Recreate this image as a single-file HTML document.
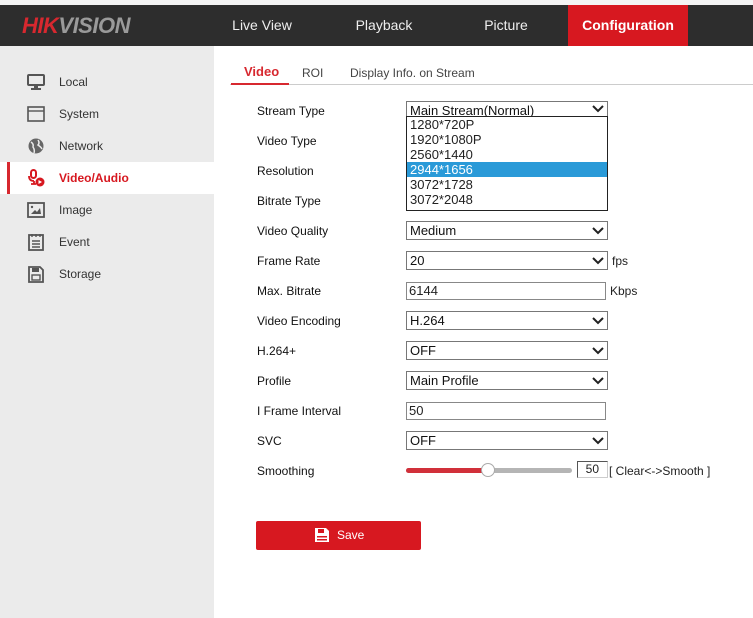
<!DOCTYPE html>
<html><head><style>
*{margin:0;padding:0;box-sizing:border-box}
body{width:753px;height:618px;position:relative;background:#fff;font-family:"Liberation Sans",Arial,sans-serif;font-size:12px;color:#222;overflow:hidden}
.abs{position:absolute}
.top{left:0;top:0;width:753px;height:5px;background:#f4f4f4}
.bar{left:0;top:5px;width:753px;height:41px;background:#2d2d2d}
.nav{top:5px;height:41px;line-height:41px;color:#eee;font-size:14px;text-align:center}
.side{left:0;top:46px;width:214px;height:572px;background:#ebebeb}
.mi{left:0;width:214px;height:32px;line-height:32px;padding-left:59px;font-size:12px;color:#333}
.ic{position:absolute;left:27px;top:8px;width:18px;height:16px}
.lbl{left:257px;font-size:12px;color:#111}
.sel{left:406px;width:202px;height:19px;border:1px solid #777;background:#fff;font-size:13px;line-height:17px;padding-left:3px;color:#111}
.sel svg{position:absolute;right:3px;top:5px}
.inp{left:406px;width:200px;height:18px;border:1px solid #888;font-size:13px;line-height:16px;padding-left:2px}
</style></head><body>
<div class="abs top"></div>
<div class="abs bar"></div>
<div class="abs" style="left:22px;top:13px;font-size:22px;font-weight:bold;font-style:italic;letter-spacing:-0.5px;line-height:26px"><span style="color:#d7282f">HIK</span><span style="color:#9a9a9a">VISION</span></div>
<div class="abs nav" style="left:214px;width:96px">Live View</div>
<div class="abs nav" style="left:335px;width:98px">Playback</div>
<div class="abs nav" style="left:458px;width:96px">Picture</div>
<div class="abs nav" style="left:568px;width:120px;background:#d71820;color:#fff;font-weight:bold">Configuration</div>
<div class="abs side"></div>

<div class="abs mi" style="top:66px"><svg class="ic" viewBox="0 0 18 16"><rect x="1" y="1" width="16" height="10" rx="1" fill="none" stroke="#555" stroke-width="2"/><rect x="7" y="11" width="4" height="3" fill="#555"/><rect x="4" y="14" width="10" height="2" fill="#555"/></svg>Local</div>
<div class="abs mi" style="top:98px"><svg class="ic" viewBox="0 0 18 16"><rect x="1" y="1" width="16" height="14" fill="none" stroke="#555" stroke-width="1.6"/><line x1="1" y1="5" x2="17" y2="5" stroke="#555" stroke-width="1.4"/></svg>System</div>
<div class="abs mi" style="top:130px"><svg class="ic" viewBox="0 0 18 16"><circle cx="9" cy="8" r="7.5" fill="#666"/><path d="M4 4 Q7 6 6 9 Q8 12 7 15 M11 2 Q13 5 11 7 Q14 9 15 11" stroke="#ebebeb" stroke-width="1.5" fill="none"/></svg>Network</div>
<div class="abs mi" style="top:162px;background:#fff;color:#d71820;font-weight:bold"><div class="abs" style="left:7px;top:0;width:3px;height:32px;background:#d7282f"></div><svg class="ic" viewBox="0 0 18 18" style="height:18px;top:7px"><rect x="4" y="1" width="5" height="8" rx="2.5" fill="none" stroke="#d71820" stroke-width="2"/><path d="M2 7 Q2 12 7 12 M7 12 V15 M4 15 H9" stroke="#d71820" stroke-width="1.8" fill="none"/><circle cx="13" cy="13" r="4.5" fill="#d71820"/><path d="M11.5 11 L15 13 L11.5 15Z" fill="#fff"/></svg>Video/Audio</div>
<div class="abs mi" style="top:194px"><svg class="ic" viewBox="0 0 18 16"><rect x="1" y="1" width="16" height="14" fill="none" stroke="#555" stroke-width="1.8"/><path d="M4 12 L8 8 L10 10 L13 6 L14 12Z" fill="#555"/><circle cx="5" cy="5" r="1.2" fill="#555"/></svg>Image</div>
<div class="abs mi" style="top:226px"><svg class="ic" viewBox="0 0 18 18" style="height:18px;top:7px"><rect x="2" y="2" width="14" height="15" fill="none" stroke="#555" stroke-width="1.8"/><path d="M5 1v3M9 1v3M13 1v3M5 8h8M5 11h8M5 14h8" stroke="#555" stroke-width="1.4"/></svg>Event</div>
<div class="abs mi" style="top:258px"><svg class="ic" viewBox="0 0 18 18" style="height:18px;top:7px"><path d="M2 2h11l3 3v12H2Z" fill="none" stroke="#555" stroke-width="1.8"/><rect x="5" y="3" width="7" height="4" fill="#555"/><rect x="5" y="10" width="8" height="5" fill="none" stroke="#555" stroke-width="1.4"/></svg>Storage</div>

<div class="abs" style="left:230px;top:84px;width:523px;height:1px;background:#ccc"></div>
<div class="abs" style="left:231px;top:83px;width:58px;height:2px;background:#d7282f"></div>
<div class="abs" style="left:244px;top:64px;font-size:13px;font-weight:bold;color:#d7282f">Video</div>
<div class="abs" style="left:302px;top:66px;font-size:12px;color:#444">ROI</div>
<div class="abs" style="left:350px;top:66px;font-size:12px;color:#444">Display Info. on Stream</div>

<div class="abs lbl" style="top:104px">Stream Type</div>
<div class="abs lbl" style="top:134px">Video Type</div>
<div class="abs lbl" style="top:164px">Resolution</div>
<div class="abs lbl" style="top:194px">Bitrate Type</div>
<div class="abs lbl" style="top:224px">Video Quality</div>
<div class="abs lbl" style="top:254px">Frame Rate</div>
<div class="abs lbl" style="top:284px">Max. Bitrate</div>
<div class="abs lbl" style="top:314px">Video Encoding</div>
<div class="abs lbl" style="top:344px">H.264+</div>
<div class="abs lbl" style="top:374px">Profile</div>
<div class="abs lbl" style="top:404px">I Frame Interval</div>
<div class="abs lbl" style="top:434px">SVC</div>
<div class="abs lbl" style="top:464px">Smoothing</div>

<div class="abs sel" style="top:101px;height:16px;overflow:hidden">Main Stream(Normal)<svg width="12" height="8" viewBox="0 0 12 8" style="top:3px"><path d="M1 1l5 5 5-5" stroke="#222" stroke-width="2" fill="none"/></svg></div>
<div class="abs" style="left:406px;top:116px;width:202px;height:95px;border:1px solid #222;background:#fff;font-size:13px;line-height:15px">
<div style="padding-left:3px">1280*720P</div>
<div style="padding-left:3px">1920*1080P</div>
<div style="padding-left:3px">2560*1440</div>
<div style="padding-left:3px;background:#2a9ad8;color:#fff">2944*1656</div>
<div style="padding-left:3px">3072*1728</div>
<div style="padding-left:3px">3072*2048</div>
</div>

<div class="abs sel" style="top:221px">Medium<svg width="12" height="8" viewBox="0 0 12 8"><path d="M1 1l5 5 5-5" stroke="#222" stroke-width="2" fill="none"/></svg></div>
<div class="abs sel" style="top:251px">20<svg width="12" height="8" viewBox="0 0 12 8"><path d="M1 1l5 5 5-5" stroke="#222" stroke-width="2" fill="none"/></svg></div>
<div class="abs" style="left:612px;top:254px">fps</div>
<div class="abs inp" style="top:282px">6144</div>
<div class="abs" style="left:610px;top:284px">Kbps</div>
<div class="abs sel" style="top:311px">H.264<svg width="12" height="8" viewBox="0 0 12 8"><path d="M1 1l5 5 5-5" stroke="#222" stroke-width="2" fill="none"/></svg></div>
<div class="abs sel" style="top:341px">OFF<svg width="12" height="8" viewBox="0 0 12 8"><path d="M1 1l5 5 5-5" stroke="#222" stroke-width="2" fill="none"/></svg></div>
<div class="abs sel" style="top:371px">Main Profile<svg width="12" height="8" viewBox="0 0 12 8"><path d="M1 1l5 5 5-5" stroke="#222" stroke-width="2" fill="none"/></svg></div>
<div class="abs inp" style="top:402px">50</div>
<div class="abs sel" style="top:431px">OFF<svg width="12" height="8" viewBox="0 0 12 8"><path d="M1 1l5 5 5-5" stroke="#222" stroke-width="2" fill="none"/></svg></div>

<div class="abs" style="left:406px;top:468px;width:166px;height:5px;border-radius:3px;background:#b5b5b5"></div>
<div class="abs" style="left:406px;top:468px;width:82px;height:5px;border-radius:3px;background:#d1303a"></div>
<div class="abs" style="left:481px;top:463px;width:14px;height:14px;border-radius:50%;background:#fff;border:1px solid #aaa"></div>
<div class="abs" style="left:577px;top:461px;width:31px;height:17px;border:1px solid #555;border-right-color:#ccc;border-bottom-color:#ccc;text-align:right;padding-right:8px;line-height:15px">50</div>
<div class="abs" style="left:609px;top:464px">[ Clear&lt;-&gt;Smooth ]</div>

<div class="abs" style="left:256px;top:521px;width:165px;height:29px;background:#d71820;border-radius:2px;color:#fff;line-height:29px;font-size:12px"><svg class="abs" style="left:59px;top:7px" width="14" height="14" viewBox="0 0 14 14"><path d="M0 0h11l3 3v11H0Z" fill="#fff"/><rect x="3" y="1" width="6" height="4" fill="#d71820"/><rect x="2" y="8" width="10" height="1.5" fill="#d71820"/><rect x="2" y="11" width="10" height="1.5" fill="#d71820"/></svg><span class="abs" style="left:81px">Save</span></div>
</body></html>
